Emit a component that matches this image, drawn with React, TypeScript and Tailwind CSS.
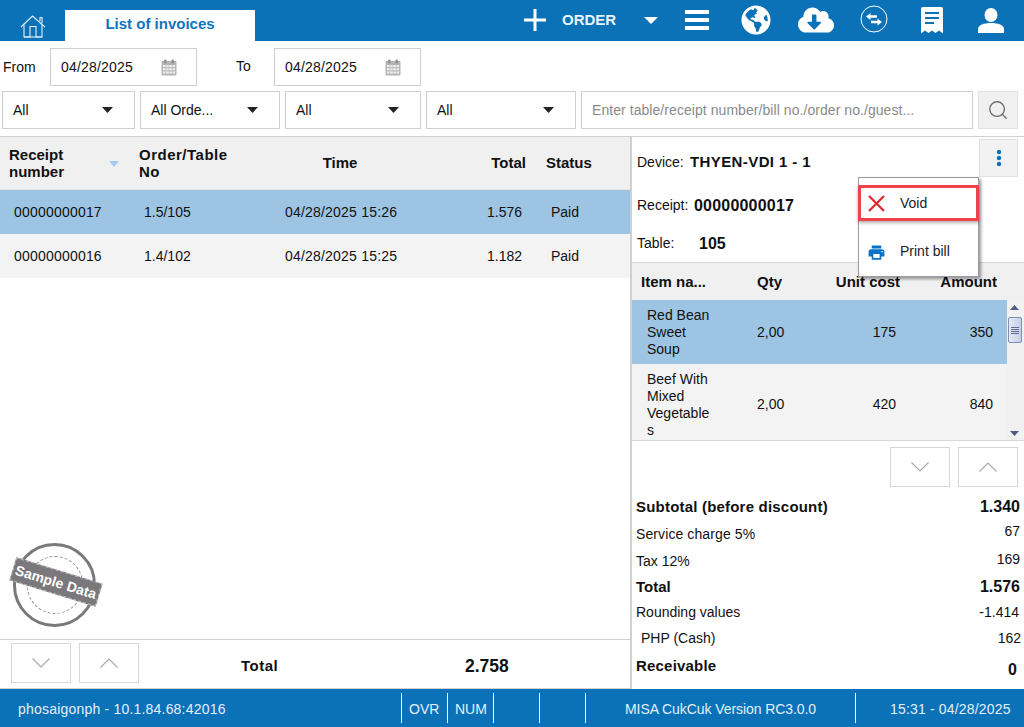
import React from "react";
import { FaGlobeAmericas, FaCloudDownloadAlt } from "react-icons/fa";
import { MdPrint } from "react-icons/md";
import { Search } from "lucide-react";

function Cal() {
  return (
    <svg width="16" height="17" viewBox="0 0 16 17" className="shrink-0">
      <rect x="0.5" y="2" width="15" height="14.5" rx="1" fill="#b5b5b5" />
      <rect x="3" y="0.5" width="2.5" height="4" rx="1" fill="#8f8f8f" />
      <rect x="10.5" y="0.5" width="2.5" height="4" rx="1" fill="#8f8f8f" />
      <g fill="#eeeeee">
        <rect x="2" y="6" width="2.5" height="2.2" /><rect x="5.2" y="6" width="2.5" height="2.2" /><rect x="8.4" y="6" width="2.5" height="2.2" /><rect x="11.6" y="6" width="2.5" height="2.2" />
        <rect x="2" y="9.2" width="2.5" height="2.2" /><rect x="5.2" y="9.2" width="2.5" height="2.2" /><rect x="8.4" y="9.2" width="2.5" height="2.2" /><rect x="11.6" y="9.2" width="2.5" height="2.2" />
        <rect x="2" y="12.4" width="2.5" height="2.2" /><rect x="5.2" y="12.4" width="2.5" height="2.2" /><rect x="8.4" y="12.4" width="2.5" height="2.2" /><rect x="11.6" y="12.4" width="2.5" height="2.2" />
      </g>
    </svg>
  );
}

function DateBox({ w }: { w: string }) {
  return (
    <div className={`${w} h-[38px] border border-[#cfcfcf] flex items-center pl-[10px] pr-[19px] justify-between text-[#111]`}>
      <span className="tracking-[0.2px]">04/28/2025</span>
      <Cal />
    </div>
  );
}

function Sel({ w, label, pr }: { w: string; label: string; pr: string }) {
  return (
    <div className={`${w} ${pr} h-[38px] border border-[#cfcfcf] flex items-center pl-[10px] justify-between text-[#111]`}>
      <span>{label}</span>
      <svg width="11" height="6" viewBox="0 0 11 6"><path d="M0 0H11L5.5 6Z" fill="#222" /></svg>
    </div>
  );
}

function Chev({ up }: { up?: boolean }) {
  return (
    <div className="w-[60px] h-[40px] border border-[#d6d6d6] flex items-center justify-center">
      <svg width="18" height="10" viewBox="0 0 18 10" fill="none" stroke="#aaaaaa" strokeWidth="1.2">
        {up ? <path d="M0.5 9.5L9 1L17.5 9.5" /> : <path d="M0.5 0.5L9 9L17.5 0.5" />}
      </svg>
    </div>
  );
}

const listCols = "grid grid-cols-[135px_135px_140px_116px_1fr] items-center";
const itemCols = "grid grid-cols-[115px_53px_100px_107px] items-center";

function InvRow({ sel, no, tb, time, total }: { sel?: boolean; no: string; tb: string; time: string; total: string }) {
  return (
    <div className={`${listCols} h-[44px] text-[#111] ${sel ? "bg-[#9dc5e3]" : "bg-[#f3f3f3]"}`}>
      <div className="pl-[14px] tracking-[0.2px]">{no}</div>
      <div className="pl-[9px]">{tb}</div>
      <div className="pl-[15px] tracking-[0.2px] whitespace-nowrap">{time}</div>
      <div className="text-right pr-[4px]">{total}</div>
      <div className="pl-[25px]">Paid</div>
    </div>
  );
}

function Sum({ h, label, value, bold, labelCls = "", valueCls = "" }: { h: string; label: string; value: string; bold?: boolean; labelCls?: string; valueCls?: string }) {
  return (
    <div className={`${h} flex items-center justify-between pl-[4px] pr-[4px] text-[#111] ${bold ? "font-bold" : ""}`}>
      <span className={labelCls}>{label}</span>
      <span className={valueCls}>{value}</span>
    </div>
  );
}

export default function App() {
  return (
    <div className="relative w-[1024px] h-[727px] overflow-hidden bg-white flex flex-col font-['Liberation_Sans',Arial,sans-serif] text-[14px] leading-[17px]">
      {/* Top bar */}
      <div className="h-[41px] shrink-0 bg-[#0b72b8] flex text-white">
        <div className="w-[65px] flex items-start justify-center pt-[15px] pl-[1px]">
          <svg width="26" height="23" viewBox="0 0 26 23" fill="none" stroke="#e4f0f9" strokeWidth="1.1">
            <path d="M1 12L12.5 1L25 12" />
            <path d="M20 6V2.5H22V8" />
            <path d="M4 9.5V22H10V11.5H16V22H22V9.5" />
            <path d="M4 22H22" />
          </svg>
        </div>
        <div className="w-[190px] h-[31px] mt-[10px] bg-white flex items-center justify-center text-[#1273bd] font-bold text-[15px] pb-[4px]">List of invoices</div>
        <div className="w-[269px]" />
        <svg width="22" height="22" viewBox="0 0 22 22" className="mt-[9px]"><path d="M9.5 0h3v9.5H22v3h-9.5V22h-3v-9.5H0v-3h9.5z" fill="#fff" /></svg>
        <span className="ml-[16px] mt-[11px] font-bold text-[15px] text-[#eaf3fa] w-[56px]">ORDER</span>
        <svg width="14" height="7" viewBox="0 0 14 7" className="ml-[26px] mt-[17px]"><path d="M0 0H14L7 7Z" fill="#fff" /></svg>
        <div className="ml-[27px] mt-[10px] w-[24px] flex flex-col gap-[4px]">
          <div className="h-[4px] bg-white" /><div className="h-[4px] bg-white" /><div className="h-[4px] bg-white" />
        </div>
        <FaGlobeAmericas size={30} className="ml-[32px] mt-[5px]" />
        <FaCloudDownloadAlt size={36} className="ml-[27px] mt-[2px]" />
        <svg width="28" height="28" viewBox="0 0 28 28" fill="none" className="ml-[26px] mt-[5px]">
          <circle cx="14" cy="14" r="13" stroke="#fff" strokeWidth="1" />
          <path d="M6 11.5L10.5 8V10.3H17V12.7H10.5V15Z" fill="#fff" />
          <path d="M22 17L17.5 13.5V15.8H11V18.2H17.5V20.5Z" fill="#fff" />
        </svg>
        <svg width="22" height="27" viewBox="0 0 22 27" className="ml-[33px] mt-[7px]">
          <path fillRule="evenodd" d="M2 0H20A2 2 0 0 1 22 2V26.5L18 23.5L14.5 26L11 23.5L7.5 26L4 23.5L0 26.5V2A2 2 0 0 1 2 0ZM4 5V7H18V5ZM4 10V12H18V10ZM4 15V17H13V15Z" fill="#fff" />
        </svg>
        <svg width="26" height="25" viewBox="0 0 26 25" className="ml-[35px] mt-[8px]">
          <ellipse cx="13" cy="7" rx="6.5" ry="7" fill="#fff" />
          <path d="M0 25V21C0 17 6 15 13 15S26 17 26 21V25Z" fill="#fff" />
        </svg>
      </div>

      {/* Date row */}
      <div className="mt-[7px] h-[38px] flex items-center text-[#111] shrink-0">
        <span className="ml-[3px] w-[47px]">From</span>
        <DateBox w="w-[147px]" />
        <span className="ml-[39px] w-[38px] -mt-[1px]">To</span>
        <DateBox w="w-[147px]" />
      </div>

      {/* Filter row */}
      <div className="mt-[5px] ml-[2px] h-[38px] flex gap-[5px] shrink-0">
        <Sel w="w-[133px]" pr="pr-[21px]" label="All" />
        <Sel w="w-[140px]" pr="pr-[21px]" label="All Orde..." />
        <Sel w="w-[136px]" pr="pr-[21px]" label="All" />
        <Sel w="w-[150px]" pr="pr-[21px]" label="All" />
        <div className="w-[392px] h-[38px] border border-[#cfcfcf] flex items-center pl-[10px] text-[#8a8a8a] tracking-[0.06px]">Enter table/receipt number/bill no./order no./guest...</div>
        <div className="w-[40px] h-[38px] bg-[#f0f0f0] border border-[#e2e2e2] flex items-center justify-center">
          <Search size={22} strokeWidth={1.5} color="#6e6e6e" />
        </div>
      </div>

      {/* Main */}
      <div className="mt-[7px] flex-1 min-h-0 flex border-t border-[#d0d0d0]">
        {/* Left */}
        <div className="w-[630px] flex flex-col border-b border-[#d0d0d0]">
          <div className={`${listCols} h-[53px] bg-[#f0f0f0] border-b border-[#e4e4e4] font-bold text-[15px] text-[#111]`}>
            <div className="pl-[9px] flex items-center">
              <span className="w-[100px]">Receipt<br />number</span>
              <svg width="10" height="6" viewBox="0 0 10 6" className="mt-[2px]"><path d="M0 0H10L5 6Z" fill="#a3cbf5" /></svg>
            </div>
            <div className="pl-[4px] tracking-[0.5px] whitespace-nowrap">Order/Table<br />No</div>
            <div className="text-center -mt-[2px]">Time</div>
            <div className="text-right -mt-[2px]">Total</div>
            <div className="pl-[20px] -mt-[2px]">Status</div>
          </div>
          <InvRow sel no="00000000017" tb="1.5/105" time="04/28/2025 15:26" total="1.576" />
          <InvRow no="00000000016" tb="1.4/102" time="04/28/2025 15:25" total="1.182" />
          <div className="flex-1" />
          <div className="h-[49px] border-t border-[#d0d0d0] flex items-start text-[#111]">
            <div className="ml-[11px] mt-[3px] flex gap-[8px]"><Chev /><Chev up /></div>
            <span className="absolute left-[241px] top-[657px] font-bold text-[15px] tracking-[0.5px]">Total</span>
            <span className="absolute left-[465px] top-[657px] font-bold text-[17.5px] leading-[18px]">2.758</span>
          </div>
        </div>

        {/* Right */}
        <div className="w-[394px] border-l-2 border-[#d0d0d0] flex flex-col">
          <div className="h-[125px] relative text-[#111]">
            <div className="h-[51px] flex items-center pl-[5px] pb-[1px]">
              <span className="w-[53px]">Device:</span><b className="text-[15px] tracking-[0.4px] -mt-[1px]">THYEN-VDI 1 - 1</b>
            </div>
            <div className="h-[34px] flex items-center pl-[5px]">
              <span className="w-[57px]">Receipt:</span><b className="text-[16px] tracking-[0.2px]">00000000017</b>
            </div>
            <div className="h-[41px] flex items-center pl-[5px] pt-[1px]">
              <span className="w-[62px]">Table:</span><b className="text-[16px]">105</b>
            </div>
            <div className="absolute left-[347px] top-[2px] w-[39px] h-[38px] bg-[#f2f2f2] border border-[#e2e2e2] flex items-center justify-center">
              <svg width="6" height="18" viewBox="0 0 6 18" fill="#0b72b8"><circle cx="3" cy="3" r="2.2" /><circle cx="3" cy="9" r="2.2" /><circle cx="3" cy="15" r="2.2" /></svg>
            </div>
          </div>
          <div className={`${itemCols} h-[38px] w-[392px] bg-[#f0f0f0] border-t border-[#d6d6d6] font-bold text-[15px] text-[#111]`}>
            <div className="pl-[9px]">Item na...</div>
            <div className="pl-[10px]">Qty</div>
            <div className="text-right whitespace-nowrap">Unit cost</div>
            <div className="text-right pr-[10px]">Amount</div>
          </div>
          <div className="flex h-[141px] border-b border-[#d6d6d6]">
            <div className="w-[375px]">
              <div className={`${itemCols} h-[64px] bg-[#9dc5e3] text-[#111]`}>
                <div className="pl-[15px]">Red Bean<br />Sweet<br />Soup</div>
                <div className="pl-[10px]">2,00</div>
                <div className="text-right pr-[4px]">175</div>
                <div className="text-right pr-[14px]">350</div>
              </div>
              <div className={`${itemCols} h-[76px] pt-[4px] bg-[#f3f3f3] text-[#111]`}>
                <div className="pl-[15px] mt-[2px]">Beef With<br />Mixed<br />Vegetable<br />s</div>
                <div className="pl-[10px]">2,00</div>
                <div className="text-right pr-[4px]">420</div>
                <div className="text-right pr-[14px]">840</div>
              </div>
            </div>
            <div className="w-[17px] pr-[2px] bg-[#f1f1f1] flex flex-col items-center">
              <svg width="9" height="5" viewBox="0 0 9 5" className="mt-[5px]"><path d="M0 5H9L4.5 0Z" fill="#4f5b82" /></svg>
              <div className="mt-[7px] w-[14px] h-[26px] border border-[#7f90b8] rounded-[2px] bg-gradient-to-r from-[#e6ecf6] to-[#c3cfe4] flex flex-col items-center justify-center gap-[1px]">
                <div className="w-[8px] h-px bg-[#5d6a8c]" /><div className="w-[8px] h-px bg-[#5d6a8c]" /><div className="w-[8px] h-px bg-[#5d6a8c]" /><div className="w-[8px] h-px bg-[#5d6a8c]" />
              </div>
              <div className="flex-1" />
              <svg width="9" height="5" viewBox="0 0 9 5" className="mb-[4px]"><path d="M0 0H9L4.5 5Z" fill="#4f5b82" /></svg>
            </div>
          </div>
          <div className="flex justify-end gap-[8px] pr-[6px] pt-[6px] h-[52px] shrink-0"><Chev /><Chev up /></div>
          <div>
            <Sum h="h-[26px]" label="Subtotal (before discount)" value="1.340" bold labelCls="text-[15px] tracking-[0.2px]" valueCls="text-[16px]" />
            <Sum h="h-[30px]" label="Service charge 5%" value="67" labelCls="tracking-[0.1px]" valueCls="-mt-[6px]" />
            <Sum h="h-[24px]" label="Tax 12%" value="169" valueCls="-mt-[4px]" />
            <Sum h="h-[26px]" label="Total" value="1.576" bold labelCls="text-[15px]" valueCls="text-[16px]" />
            <Sum h="h-[26px]" label="Rounding values" value="-1.414" valueCls="mr-px" />
            <Sum h="h-[26px]" label="PHP (Cash)" value="162" labelCls="ml-[5px]" valueCls="-mr-px" />
            <Sum h="h-[28px]" label="Receivable" value="0" bold labelCls="text-[15px] tracking-[0.2px]" valueCls="text-[16px] mt-[8px] mr-[3px]" />
          </div>
        </div>
      </div>

      {/* Status bar */}
      <div className="h-[38px] shrink-0 bg-[#0b72b8] flex py-[4px] text-[#e3eff8] leading-[32px]">
        <div className="w-[401px] pl-[18px] tracking-[0.2px]">phosaigonph - 10.1.84.68:42016</div>
        <div className="w-[46px] border-l border-white pl-[7px]">OVR</div>
        <div className="w-[46px] border-l border-white pl-[7px]">NUM</div>
        <div className="w-[46px] border-l border-white" />
        <div className="w-[46px] border-l border-white" />
        <div className="w-[270px] border-l border-white pl-[39px] tracking-[-0.07px]">MISA CukCuk Version RC3.0.0</div>
        <div className="flex-1 border-l border-white pl-[34px] tracking-[0.17px] whitespace-nowrap">15:31 - 04/28/2025</div>
      </div>

      {/* Popup menu */}
      <div className="absolute left-[858px] top-[177px] w-[121px] h-[100px] bg-white border border-[#9a9aa8] shadow-[2px_2px_3px_rgba(0,0,0,0.4)] text-[#222]">
        <div className="mt-[7px] -ml-px w-[121px] h-[36px] border-[3px] border-[#f0424a] shadow-[0_2px_3px_rgba(0,0,0,0.3)] flex items-center">
          <svg width="17" height="17" viewBox="0 0 17 17" className="ml-[7px]" stroke="#e2262c" strokeWidth="2.2"><path d="M1 1L16 16M16 1L1 16" /></svg>
          <span className="ml-[15px]">Void</span>
        </div>
        <div className="mt-[13px] h-[36px] flex items-center">
          <MdPrint size={19} color="#0b72c4" className="ml-[8px]" />
          <span className="ml-[14px] -mt-[1px]">Print bill</span>
        </div>
      </div>

      {/* Sample Data stamp */}
      <div className="absolute left-[10px] top-[541px] w-[92px] h-[88px]">
        <div className="absolute left-[3px] top-[2px] w-[83px] h-[84px] rounded-full border-[3px] border-[#7a787b] bg-white" />
        <div className="absolute left-[17px] top-[15px] w-[56px] h-[58px] rounded-full border border-dashed border-[#8a888b]" />
        <div className="absolute left-[1px] top-[29px] w-[90px] h-[24px] bg-[#7a787b] rotate-[17deg] flex items-center justify-center text-white font-bold text-[14px] border border-dashed border-[#bbb] whitespace-nowrap">Sample Data</div>
      </div>
    </div>
  );
}
